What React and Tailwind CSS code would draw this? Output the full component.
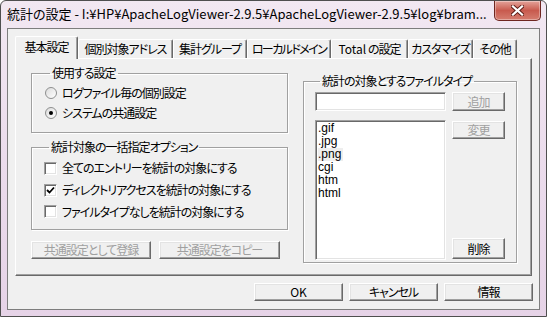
import clsx from "clsx";

const jp = "font-['Noto_Sans_CJK_JP',sans-serif] [font-feature-settings:'palt'] tracking-[-1px]";

// 3D buttons / sunken fields, classic look
const raised =
  "border border-t-white border-l-white border-r-[#696969] border-b-[#696969] bg-[#f0f0f0] shadow-[inset_-1px_-1px_0_#a0a0a0,inset_1px_1px_0_#e3e3e3]";
const sunken =
  "border border-t-[#a0a0a0] border-l-[#a0a0a0] border-r-white border-b-white bg-white shadow-[inset_1px_1px_0_#696969,inset_-1px_-1px_0_#e3e3e3]";

function Btn({ children, disabled, className }) {
  return (
    <button
      className={clsx(
        raised,
        "flex items-center justify-center text-[12px] leading-none",
        disabled ? "text-[#a0a0a0]" : "text-black",
        className
      )}
    >
      {children}
    </button>
  );
}

function Radio({ checked, label }) {
  return (
    <div className="flex h-[20px] items-center gap-[5px]">
      <span className="flex h-[12px] w-[12px] items-center justify-center rounded-full border border-[#8e8f8f] bg-gradient-to-br from-[#dcdcdc] to-white">
        {checked && <span className="h-[4px] w-[4px] rounded-full bg-black" />}
      </span>
      <span>{label}</span>
    </div>
  );
}

function Check({ checked, label, h }) {
  return (
    <div className={clsx("flex items-center gap-[5px]", h)}>
      <span className={clsx(sunken, "flex h-[13px] w-[13px] items-center justify-center")}>
        {checked && (
          <svg width="9" height="9" viewBox="0 0 9 9">
            <path d="M1 4 L3.5 6.5 L8 1.5" stroke="#000" strokeWidth="1.8" fill="none" />
          </svg>
        )}
      </span>
      <span>{label}</span>
    </div>
  );
}

function Group({ title, className, children }) {
  return (
    <fieldset
      className={clsx(
        "border border-[#a0a0a0] shadow-[1px_1px_0_white,inset_1px_1px_0_white]",
        className
      )}
    >
      <legend className="ml-[5px] px-[2px] text-[12px] leading-[14px]">{title}</legend>
      {children}
    </fieldset>
  );
}

const tabs = [
  { label: "基本設定", w: "w-[63px]", active: true },
  { label: "個別対象アドレス", w: "w-[95px]" },
  { label: "集計グループ", w: "w-[74px]" },
  { label: "ローカルドメイン", w: "w-[84px] tracking-[-1.6px]" },
  { label: <><span className="tracking-normal">Total</span>&nbsp;の設定</>, key: "total", w: "w-[77px]" },
  { label: "カスタマイズ", w: "w-[65px]" },
  { label: "その他", w: "w-[44px]" },
];

const types = [".gif", ".jpg", ".png", "cgi", "htm", "html"];

export default function App() {
  return (
    <div className={clsx(jp, "h-[317px] w-[547px] overflow-hidden bg-white text-[12px] text-black")}>
      <div className="flex h-[317px] flex-col rounded-t-[6px] border border-[#4f4f4f] bg-gradient-to-b from-[#f2e8f2] via-[#ebdcec] to-[#e6d3e7] px-[6px] pb-[6px]">
        {/* title bar */}
        <div className="flex h-[27px] items-start justify-between">
          <div className="pt-[4px] text-[13px] leading-[17px] tracking-normal whitespace-nowrap">
            統計の設定 - I:¥HP¥ApacheLogViewer-2.9.5¥ApacheLogViewer-2.9.5¥log¥bram...
          </div>
          <div className="mr-[-1px] flex h-[20px] w-[47px] items-center justify-center rounded-b-[5px] border border-t-0 border-[#6e2620] bg-gradient-to-b from-[#e3a39a] via-[#c85a4e] to-[#d57d70] shadow-[inset_0_0_0_1px_rgba(255,255,255,0.35)]">
            <svg width="13" height="11" viewBox="0 0 13 11">
              <path d="M2 1.5 L11 9.5 M11 1.5 L2 9.5" stroke="#5a1a14" strokeWidth="4" strokeLinecap="square" />
              <path d="M2 1.5 L11 9.5 M11 1.5 L2 9.5" stroke="#fff" strokeWidth="2.3" strokeLinecap="square" />
            </svg>
          </div>
        </div>

        {/* client */}
        <div className="flex flex-1 flex-col border border-[#7d7d7d] bg-[#f0f0f0] pl-[7px] pr-[6px] pt-[7px]">
          {/* tab strip */}
          <div className="flex items-end">
            {tabs.map((t) => (
              <div
                key={t.key || t.label}
                className={clsx(
                  t.w,
                  "flex items-center justify-center rounded-t-[2px] border border-b-0 border-t-white border-l-white border-r-[#696969] bg-[#f0f0f0] shadow-[inset_-1px_0_0_#a0a0a0] whitespace-nowrap",
                  t.active ? "relative z-10 mb-[-1px] h-[23px] pb-[2px]" : "h-[19px]"
                )}
              >
                {t.label}
              </div>
            ))}
          </div>

          {/* tab panel */}
          <div className="flex h-[218px] w-[517px] border border-t-white border-l-white border-r-[#696969] border-b-[#696969] shadow-[inset_-1px_-1px_0_#a0a0a0] pl-[15px] pt-[7px]">
            <div className="flex w-[257px] flex-col">
              <Group title="使用する設定" className="pb-[9px] pl-[13px]">
                <div className="pt-[3px]">
                  <Radio label="ログファイル毎の個別設定" />
                  <Radio checked label="システムの共通設定" />
                </div>
              </Group>
              <Group title="統計対象の一括指定オプション" className="mt-[7px] pb-[7px] pl-[12px]">
                <div className="pt-[3px]">
                  <Check h="h-[22px]" label="全てのエントリーを統計の対象にする" />
                  <Check checked h="h-[22px]" label="ディレクトリアクセスを統計の対象にする" />
                  <Check h="h-[21px]" label="ファイルタイプなしを統計の対象にする" />
                </div>
              </Group>
              <div className="mt-[11px] flex gap-[8px]">
                <Btn disabled className="h-[18px] w-[120px]">共通設定として登録</Btn>
                <Btn disabled className="h-[18px] w-[121px]">共通設定をコピー</Btn>
              </div>
            </div>

            <Group title="統計の対象とするファイルタイプ" className="ml-[15px] mt-[8px] h-[189px] w-[214px] pl-[11px]">
              <div className="flex gap-[6px] pt-[4px]">
                <div className="flex w-[131px] flex-col">
                  <div className={clsx(sunken, "h-[19px]")} />
                  <div className={clsx(sunken, "mt-[9px] h-[140px] px-[2px] pt-[1px] font-['Liberation_Sans',sans-serif] text-[12px] leading-[13px] tracking-normal")}>
                    {types.map((x) => (
                      <div key={x} className={clsx("w-fit pr-[2px]", x === ".png" && "bg-[#eeeeee]")}>
                        {x}
                      </div>
                    ))}
                  </div>
                </div>
                <div className="flex w-[53px] flex-col">
                  <Btn disabled className="h-[19px]">追加</Btn>
                  <Btn disabled className="mt-[10px] h-[18px]">変更</Btn>
                  <div className="flex-1" />
                  <Btn className="mb-[1px] h-[21px]">削除</Btn>
                </div>
              </div>
            </Group>
          </div>

          {/* dialog buttons */}
          <div className="mt-[7px] flex justify-end gap-[6px]">
            <Btn className="h-[18px] w-[89px] tracking-normal">OK</Btn>
            <Btn className="h-[18px] w-[89px]">キャンセル</Btn>
            <Btn className="h-[18px] w-[89px]">情報</Btn>
          </div>
        </div>
      </div>
    </div>
  );
}
